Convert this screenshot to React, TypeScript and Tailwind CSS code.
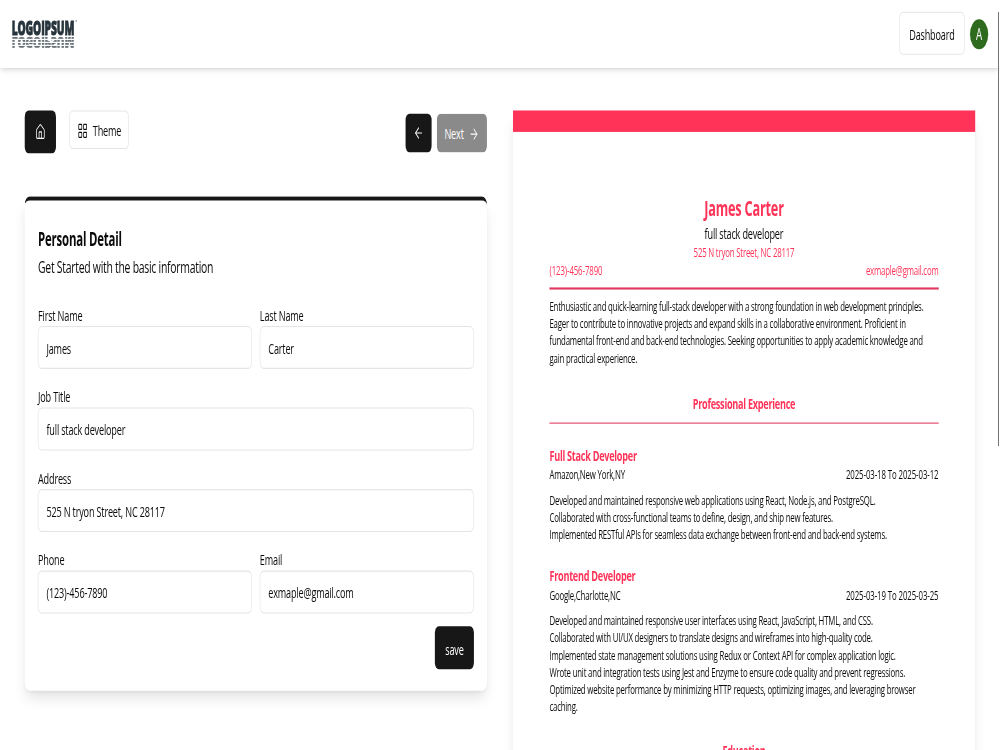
import { ArrowLeft, ArrowRight, House, LayoutGrid } from 'lucide-react'
import type { ReactNode } from 'react'

const summary = [
    'Enthusiastic and quick-learning full-stack developer with a strong foundation in web development principles.',
    'Eager to contribute to innovative projects and expand skills in a collaborative environment. Proficient in',
    'fundamental front-end and back-end technologies. Seeking opportunities to apply academic knowledge and',
    'gain practical experience.',
]

const experience = [
    {
        title: 'Full Stack Developer',
        company: 'Amazon,New York,NY',
        dates: '2025-03-18 To 2025-03-12',
        work: [
            'Developed and maintained responsive web applications using React, Node.js, and PostgreSQL.',
            'Collaborated with cross-functional teams to define, design, and ship new features.',
            'Implemented RESTful APIs for seamless data exchange between front-end and back-end systems.',
        ],
    },
    {
        title: 'Frontend Developer',
        company: 'Google,Charlotte,NC',
        dates: '2025-03-19 To 2025-03-25',
        work: [
            'Developed and maintained responsive user interfaces using React, JavaScript, HTML, and CSS.',
            'Collaborated with UI/UX designers to translate designs and wireframes into high-quality code.',
            'Implemented state management solutions using Redux or Context API for complex application logic.',
            'Wrote unit and integration tests using Jest and Enzyme to ensure code quality and prevent regressions.',
            'Optimized website performance by minimizing HTTP requests, optimizing images, and leveraging browser',
            'caching.',
        ],
    },
]

function Logo() {
    return (
        <svg
            width="102"
            height="30"
            viewBox="0 0 102 30"
            className="mt-1 overflow-visible"
            fill="#27343c"
            fontFamily="'Open Sans', sans-serif"
            fontWeight="800"
        >
            <defs>
                <pattern id="stripes" y="16.4" width="4" height="2.8" patternUnits="userSpaceOnUse">
                    <rect width="4" height="1.9" fill="#fff" />
                </pattern>
                <mask id="fade" maskUnits="userSpaceOnUse" x="0" y="15" width="102" height="16">
                    <rect y="15" width="102" height="16" fill="url(#stripes)" />
                </mask>
            </defs>
            <text x="0" y="14.4" fontSize="18.5" textLength="96" lengthAdjust="spacingAndGlyphs" stroke="#27343c" strokeWidth="0.8">
                LOGOIPSUM
            </text>
            <circle cx="99" cy="1.5" r="1" fill="#8b9398" />
            <g mask="url(#fade)" opacity="0.7">
                <text
                    transform="translate(0 16.4) scale(1 -0.8)"
                    fontSize="18.5"
                    textLength="96"
                    lengthAdjust="spacingAndGlyphs"
                    stroke="#27343c"
                    strokeWidth="0.6"
                >
                    LOGOIPSUM
                </text>
            </g>
        </svg>
    )
}

function Field({ label, value, wide }: { label: string; value: string; wide?: boolean }) {
    return (
        <div className={wide ? 'col-span-2' : ''}>
            <label className="block text-sm leading-5">{label}</label>
            <input
                className="block h-10 w-full rounded-md border border-neutral-200 bg-white px-3 pt-0.5 text-sm"
                defaultValue={value}
            />
        </div>
    )
}

function Lines({ items }: { items: string[] }) {
    return (
        <div className="text-xs leading-4 whitespace-nowrap">
            {items.map((line) => (
                <div key={line}>{line}</div>
            ))}
        </div>
    )
}

function SectionTitle({ children }: { children: ReactNode }) {
    return <h2 className="text-center text-sm leading-5 font-bold tracking-[-0.4px] text-[#ff3358]">{children}</h2>
}

function Header() {
    return (
        <header className="flex h-[63.4px] items-center justify-between px-[18px] pb-px shadow-md">
            <Logo />
            <div className="flex items-center gap-2">
                <button className="h-10 w-[101px] rounded-md border border-neutral-200 pt-0.5 text-sm">Dashboard</button>
                <div className="mt-px flex size-7 items-center justify-center rounded-full bg-[#2f6b1e] text-[15px] text-white">
                    A
                </div>
            </div>
        </header>
    )
}

function FormSection() {
    return (
        <section>
            <div className="flex items-center justify-between">
                <div className="flex items-start gap-5">
                    <button className="flex h-10 w-12 items-center justify-center rounded-md bg-neutral-900 text-white">
                        <House className="size-4" strokeWidth={1.7} />
                    </button>
                    <button className="flex h-9 w-[92px] items-center justify-center gap-2 rounded-md border border-neutral-200 pt-0.5 text-sm">
                        <LayoutGrid className="size-4" strokeWidth={1.7} />
                        Theme
                    </button>
                </div>
                <div className="flex gap-2 pt-px">
                    <button className="flex h-9 w-10 items-center justify-center rounded-md bg-neutral-900 text-white">
                        <ArrowLeft className="size-4" strokeWidth={1.7} />
                    </button>
                    <button className="flex h-9 w-[77px] items-center justify-center gap-2 rounded-md bg-neutral-900 pt-0.5 text-sm text-white opacity-50">
                        Next
                        <ArrowRight className="size-4" strokeWidth={1.7} />
                    </button>
                </div>
            </div>

            <div className="mt-10 rounded-lg border-t-4 border-neutral-900 p-5 pt-[20.4px] shadow-lg">
                <h2 className="text-[17.5px] leading-7 font-bold">Personal Detail</h2>
                <p className="pt-0.5 text-base leading-[22px] tracking-[-0.4px]">Get Started with the basic information</p>
                <div className="mt-6 grid grid-cols-2 gap-x-3 gap-y-4">
                    <Field label="First Name" value="James" />
                    <Field label="Last Name" value="Carter" />
                    <Field label="Job Title" value="full stack developer" wide />
                    <Field label="Address" value="525 N tryon Street, NC 28117" wide />
                    <Field label="Phone" value="(123)-456-7890" />
                    <Field label="Email" value="exmaple@gmail.com" />
                </div>
                <div className="mt-3 flex justify-end">
                    <button className="h-10 w-15 rounded-md bg-neutral-900 pt-1 text-sm text-white">save</button>
                </div>
            </div>
        </section>
    )
}

function ResumePreview() {
    return (
        <section className="h-[800px] border-t-20 border-[#ff3358] p-14 shadow-lg">
            <h1 className="pt-px text-center text-[19.5px] leading-7 font-bold text-[#ff3358]">James Carter</h1>
            <p className="text-center text-sm leading-[19.4px]">full stack developer</p>
            <p className="text-center text-xs leading-4 text-[#ff3358]">525 N tryon Street, NC 28117</p>
            <div className="flex justify-between text-xs leading-4 text-[#ff3358]">
                <span className="tracking-[-0.15px]">(123)-456-7890</span>
                <span>exmaple@gmail.com</span>
            </div>
            <hr className="mt-2 mb-[8.4px] border-t-2 border-[#e0395f]" />
            <Lines items={summary} />

            <div className="mt-6 mb-5">
                <SectionTitle>Professional Experience</SectionTitle>
                <hr className="mt-[7.5px] border-[#e0395f]" />
                {experience.map((job) => (
                    <div key={job.title} className="my-5">
                        <h3 className="text-sm leading-5 font-bold tracking-[-0.4px] text-[#ff3358]">{job.title}</h3>
                        <div className="mb-2 flex justify-between text-xs leading-4">
                            <span>{job.company}</span>
                            <span className="tracking-[-0.13px]">{job.dates}</span>
                        </div>
                        <Lines items={job.work} />
                    </div>
                ))}
            </div>

            <div className="pt-[3px]">
                <SectionTitle>Education</SectionTitle>
            </div>
        </section>
    )
}

export default function App() {
    return (
        <div className="relative h-[750px] w-[1000px] overflow-hidden bg-white">
            <div className="h-[700px] w-[1536px] origin-top-left [transform:scale(0.651,1.0725)] font-['Open_Sans','Noto_Sans',sans-serif] tracking-[-0.28px] text-neutral-950">
                <Header />
                <main className="grid grid-cols-2 gap-10 px-[38.4px] pt-10">
                    <FormSection />
                    <ResumePreview />
                </main>
            </div>
            {/* scrollbar thumb */}
            <div className="absolute top-3 right-px h-[434px] w-px bg-neutral-500" />
        </div>
    )
}
